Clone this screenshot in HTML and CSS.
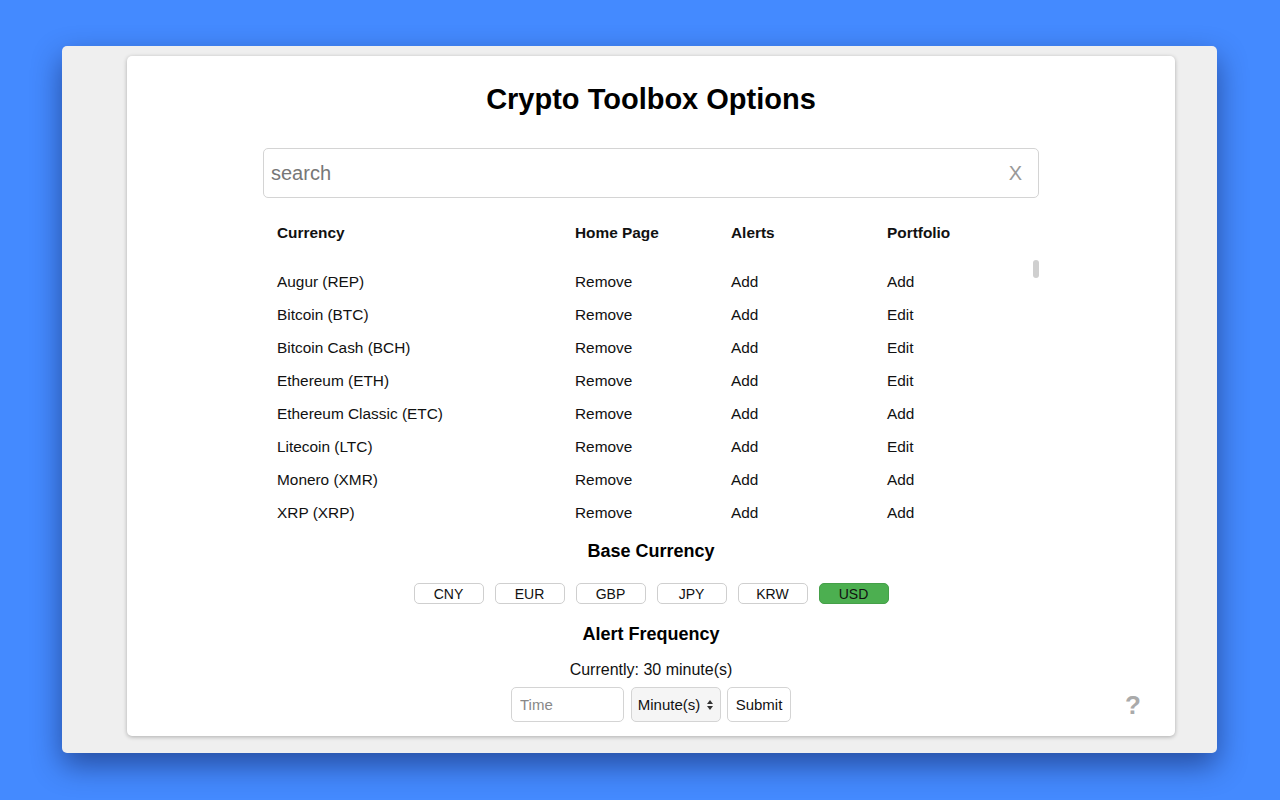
FILE: index.html
```html
<!DOCTYPE html>
<html>
<head>
<meta charset="utf-8">
<title>Crypto Toolbox Options</title>
<link rel="stylesheet" href="styles.css">
</head>
<body>
<div class="window">
  <div class="card">
    <h1 class="title">Crypto Toolbox Options</h1>
    <div class="search">
      <input class="search-input" type="text" placeholder="search">
      <span class="search-clear">X</span>
    </div>
    <div class="table">
      <div class="row head">
        <span>Currency</span><span>Home Page</span><span>Alerts</span><span>Portfolio</span>
      </div>
      <div class="scroll">
        <div class="row"><span>Augur (REP)</span><span>Remove</span><span>Add</span><span>Add</span></div>
        <div class="row"><span>Bitcoin (BTC)</span><span>Remove</span><span>Add</span><span>Edit</span></div>
        <div class="row"><span>Bitcoin Cash (BCH)</span><span>Remove</span><span>Add</span><span>Edit</span></div>
        <div class="row"><span>Ethereum (ETH)</span><span>Remove</span><span>Add</span><span>Edit</span></div>
        <div class="row"><span>Ethereum Classic (ETC)</span><span>Remove</span><span>Add</span><span>Add</span></div>
        <div class="row"><span>Litecoin (LTC)</span><span>Remove</span><span>Add</span><span>Edit</span></div>
        <div class="row"><span>Monero (XMR)</span><span>Remove</span><span>Add</span><span>Add</span></div>
        <div class="row"><span>XRP (XRP)</span><span>Remove</span><span>Add</span><span>Add</span></div>
        <div class="thumb"></div>
      </div>
    </div>
    <h2 class="section-title base-title">Base Currency</h2>
    <div class="currencies">
      <button class="cur">CNY</button>
      <button class="cur">EUR</button>
      <button class="cur">GBP</button>
      <button class="cur">JPY</button>
      <button class="cur">KRW</button>
      <button class="cur active">USD</button>
    </div>
    <h2 class="section-title freq-title">Alert Frequency</h2>
    <p class="current">Currently: 30 minute(s)</p>
    <div class="freq">
      <input class="time" type="text" placeholder="Time">
      <div class="unit">Minute(s)
        <svg class="arrows" width="8" height="12" viewBox="0 0 8 12"><path d="M4 1 L7 5 L1 5 Z M4 11 L7 7 L1 7 Z" fill="#333"/></svg>
      </div>
      <button class="submit">Submit</button>
    </div>
    <span class="help">?</span>
  </div>
</div>
</body>
</html>
```

FILE: styles.css
```css
html, body {
  margin: 0;
  padding: 0;
}
body {
  background: #448aff;
  width: 1280px;
  height: 800px;
  overflow: hidden;
  font-family: "Liberation Sans", Arial, sans-serif;
  color: #111;
  padding: 46px 0 0 62px;
  box-sizing: border-box;
}
.window {
  width: 1155px;
  height: 707px;
  background: #efefef;
  border-radius: 5px;
  box-shadow: 0 12px 30px rgba(0, 0, 40, 0.45);
  padding: 10px 42px 17px 65px;
  box-sizing: border-box;
}
.card {
  position: relative;
  background: #fff;
  height: 680px;
  border-radius: 5px;
  box-shadow: 0 1px 4px rgba(0, 0, 0, 0.28);
  padding-top: 26px;
  box-sizing: border-box;
  display: flex;
  flex-direction: column;
  align-items: center;
}
.title {
  margin: 0;
  font-size: 29px;
  line-height: 34px;
  font-weight: bold;
  color: #000;
}
.search {
  position: relative;
  margin-top: 32px;
  width: 776px;
  height: 50px;
}
.search-input {
  width: 100%;
  height: 50px;
  box-sizing: border-box;
  border: 1px solid #d4d4d4;
  border-radius: 5px;
  padding: 0 7px;
  font-family: "Liberation Sans", Arial, sans-serif;
  font-size: 20px;
  color: #333;
  outline: none;
}
.search-input::placeholder {
  color: #777;
}
.search-clear {
  position: absolute;
  right: 17px;
  top: 14px;
  font-size: 20px;
  line-height: 22px;
  color: #999;
}
.table {
  width: 776px;
  margin-top: 18px;
}
.row {
  display: grid;
  grid-template-columns: 298px 156px 156px 1fr;
  padding-left: 14px;
  height: 33px;
  align-items: center;
  font-size: 15.4px;
}
.row.head {
  font-weight: bold;
  margin-bottom: 8px;
}
.scroll {
  position: relative;
  height: 272px;
  padding-top: 8px;
  box-sizing: border-box;
  overflow: hidden;
}
.thumb {
  position: absolute;
  right: 0;
  top: 3px;
  width: 6px;
  height: 18px;
  border-radius: 3px;
  background: #cfcfcf;
}
.section-title {
  margin: 0;
  font-size: 18px;
  line-height: 20px;
  font-weight: bold;
  color: #000;
}
.base-title {
  margin-top: 12px;
}
.currencies {
  display: flex;
  gap: 11px;
  margin-top: 22px;
}
.cur {
  width: 70px;
  height: 21px;
  box-sizing: border-box;
  border: 1px solid #cfcfcf;
  border-radius: 5px;
  background: #fff;
  font-family: "Liberation Sans", Arial, sans-serif;
  font-size: 14px;
  color: #111;
  padding: 0;
}
.cur.active {
  background: #4caf50;
  border-color: #45a049;
}
.freq-title {
  margin-top: 20px;
}
.current {
  margin: 17px 0 0;
  font-size: 16px;
  line-height: 18px;
}
.freq {
  display: flex;
  gap: 6px;
  margin-top: 8px;
  height: 35px;
}
.time {
  width: 113px;
  height: 35px;
  box-sizing: border-box;
  border: 1px solid #d4d4d4;
  border-radius: 5px;
  padding: 0 8px;
  font-family: "Liberation Sans", Arial, sans-serif;
  font-size: 15px;
  outline: none;
  margin-right: 1px;
}
.time::placeholder {
  color: #888;
}
.unit {
  width: 90px;
  height: 35px;
  box-sizing: border-box;
  border: 1px solid #d4d4d4;
  border-radius: 5px;
  background: #f5f5f5;
  display: flex;
  align-items: center;
  justify-content: center;
  gap: 6px;
  font-size: 15px;
}
.submit {
  width: 64px;
  height: 35px;
  box-sizing: border-box;
  border: 1px solid #d4d4d4;
  border-radius: 5px;
  background: #fff;
  font-family: "Liberation Sans", Arial, sans-serif;
  font-size: 15px;
  color: #111;
  padding: 0;
}
.help {
  position: absolute;
  right: 34px;
  bottom: 18px;
  font-size: 26px;
  line-height: 26px;
  font-weight: bold;
  color: #aaa;
}
```
